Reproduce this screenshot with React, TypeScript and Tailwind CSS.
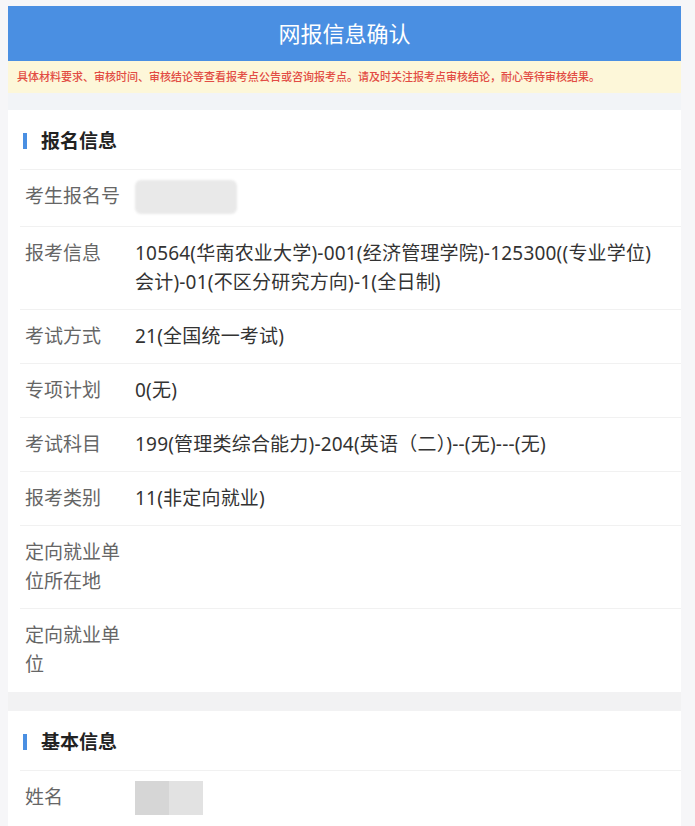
const font = { fontFamily: '"Noto Sans", "Noto Sans CJK SC", sans-serif' };

interface Row {
  label: string;
  value?: string;
  blur?: 'id' | 'name';
}

const applyRows: Row[] = [
  { label: '考生报名号', blur: 'id' },
  { label: '报考信息', value: '10564(华南农业大学)-001(经济管理学院)-125300((专业学位)会计)-01(不区分研究方向)-1(全日制)' },
  { label: '考试方式', value: '21(全国统一考试)' },
  { label: '专项计划', value: '0(无)' },
  { label: '考试科目', value: '199(管理类综合能力)-204(英语（二）)--(无)---(无)' },
  { label: '报考类别', value: '11(非定向就业)' },
  { label: '定向就业单位所在地' },
  { label: '定向就业单位' },
];

const basicRows: Row[] = [{ label: '姓名', blur: 'name' }];

function Blurred({ kind }: { kind: 'id' | 'name' }) {
  if (kind === 'id') {
    return <div className="w-[102px] h-[34px] mt-[-2px] rounded-[6px] bg-[#e9e9e9] blur-[1px]"></div>;
  }
  return (
    <div className="flex h-[34px] mt-[-2px]">
      <div className="w-[34px] h-full bg-[#d6d6d6]"></div>
      <div className="w-[34px] h-full bg-[#e2e2e2]"></div>
    </div>
  );
}

function Section({ title, rows, last }: { title: string; rows: Row[]; last?: boolean }) {
  return (
    <div className="bg-white">
      <div className="ml-[12px] h-[60px] flex items-center border-b border-[#f1f1f1]">
        <span className="w-[4px] h-[16px] bg-[#4a8fe2] ml-[3px] mr-[14px] mt-[2px]"></span>
        <span className="text-[19px] font-bold text-[#222] mt-[3px]">{title}</span>
      </div>
      {rows.map((row, i) => (
        <div
          key={row.label}
          className={
            'ml-[12px] flex py-[12px] text-[19px] leading-[29px] ' +
            (i < rows.length - 1 ? 'border-b border-[#f1f1f1]' : last ? '' : 'pb-[13px]')
          }
        >
          <div className="w-[115px] shrink-0 pl-[5px] pr-[14px] text-[#666]">{row.label}</div>
          <div className="flex-1 pr-[16px] text-[#333] tracking-[0.2px]">
            {row.blur ? <Blurred kind={row.blur} /> : row.value}
          </div>
        </div>
      ))}
    </div>
  );
}

export default function App() {
  return (
    <div className="min-h-screen bg-[#f6f6f8] pt-[6px]" style={font}>
      <div className="ml-2 mr-[14px]">
        <div className="h-[55px] bg-[#4a8fe2] flex items-center justify-center">
          <h1 className="text-white text-[22px]">网报信息确认</h1>
        </div>
        <div className="h-[32px] bg-[#fdf7d9] flex items-center pl-[9px]">
          <p className="text-[11px] text-[#e24c44] font-medium whitespace-nowrap">
            具体材料要求、审核时间、审核结论等查看报考点公告或咨询报考点。请及时关注报考点审核结论，耐心等待审核结果。
          </p>
        </div>
        <div className="h-[17px] bg-[#f2f4f7]"></div>
        <Section title="报名信息" rows={applyRows} />
        <div className="h-[19px] bg-[#f2f2f3]"></div>
        <Section title="基本信息" rows={basicRows} last />
      </div>
    </div>
  );
}
